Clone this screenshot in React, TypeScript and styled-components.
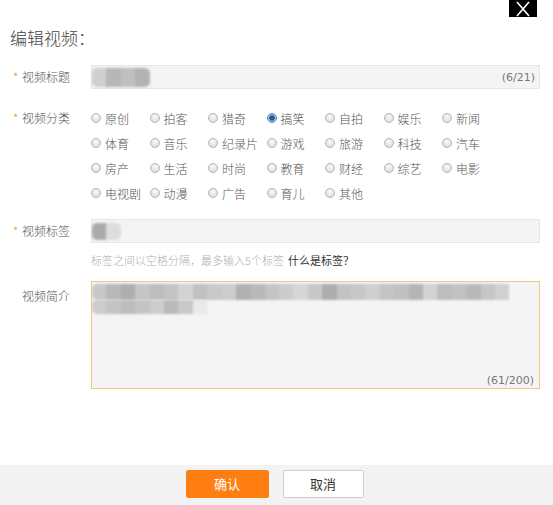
import React, { useState } from 'react';
import styled, { createGlobalStyle } from 'styled-components';

const GlobalStyle = createGlobalStyle`
    html, body {
        margin: 0;
        padding: 0;
        background: #fff;
    }
    body {
        font-family: "Noto Sans CJK SC", "Liberation Sans", sans-serif;
        color: #333;
    }
`;

const Dialog = styled.div`
    width: 553px;
    height: 505px;
    display: flex;
    flex-direction: column;
    position: relative;
    overflow: hidden;
`;

const CloseButton = styled.button`
    position: absolute;
    top: 0;
    right: 16px;
    width: 28px;
    height: 17px;
    background: #000;
    border: none;
    padding: 0;
    display: flex;
    align-items: center;
    justify-content: center;
    cursor: pointer;
`;

const Title = styled.h2`
    margin: 0;
    padding: 26px 0 0 10px;
    height: 30px;
    font-size: 17px;
    font-weight: 300;
    color: #444;
    line-height: 24px;
`;

const Form = styled.div`
    flex: 1;
    display: flex;
    flex-direction: column;
    padding-top: 9px;
`;

const Row = styled.div<{ $mt?: number }>`
    display: flex;
    align-items: flex-start;
    margin-top: ${p => p.$mt || 0}px;
`;

const Label = styled.div<{ $pt?: number }>`
    width: 78px;
    padding-left: 13px;
    padding-top: ${p => p.$pt || 0}px;
    flex-shrink: 0;
    font-size: 12px;
    font-weight: 300;
    line-height: 24px;
    color: #555;
    display: flex;
`;

const Star = styled.span<{ $hidden?: boolean }>`
    width: 9px;
    color: #f28a2e;
    visibility: ${p => (p.$hidden ? 'hidden' : 'visible')};
`;

const Field = styled.div`
    width: 449px;
    display: flex;
    flex-direction: column;
`;

const InputBox = styled.div`
    background: #f4f4f4;
    border: 1px solid #e6e6e6;
    box-sizing: border-box;
    height: 24px;
    display: flex;
    align-items: center;
    justify-content: space-between;
    padding-right: 4px;
`;

const Mosaic = styled.div<{ $h: number }>`
    display: flex;
    height: ${p => p.$h}px;
    filter: blur(0.8px);
    border-radius: 5px;
    overflow: hidden;
`;

const Tile = styled.span`
    width: 14.4px;
    height: 100%;
`;

const Counter = styled.span`
    font-family: "DejaVu Sans", "Liberation Sans", sans-serif;
    font-size: 11px;
    color: #777;
`;

const RadioGrid = styled.div`
    display: grid;
    grid-template-columns: repeat(7, 58.5px);
    grid-auto-rows: 25px;
`;

const RadioItem = styled.label`
    display: flex;
    align-items: center;
    font-size: 12px;
    font-weight: 300;
    color: #555;
    cursor: pointer;
    height: 24px;
`;

const RadioDot = styled.span<{ $checked?: boolean }>`
    width: 10px;
    height: 10px;
    border-radius: 50%;
    box-sizing: border-box;
    border: 1px solid ${p => (p.$checked ? '#5a7fa8' : '#b4b4b4')};
    background: ${p =>
        p.$checked
            ? 'radial-gradient(circle, #1e5d9e 0 2.5px, #9ab8d8 3px, #e8eef5 100%)'
            : 'radial-gradient(circle at 50% 35%, #fafafa, #d6d6d6)'};
    margin-right: 4px;
    flex-shrink: 0;
`;

const Hint = styled.div`
    font-size: 11px;
    font-weight: 300;
    line-height: 18px;
    margin-top: 8px;
    color: #b0b0b0;
`;

const HintLink = styled.a`
    color: #333;
    font-weight: 400;
    margin-left: 4px;
    cursor: pointer;
`;

const TextArea = styled.div`
    height: 108px;
    box-sizing: border-box;
    background: #f4f4f4;
    border: 1px solid #f0c97c;
    position: relative;
    padding-top: 2px;
    display: flex;
    flex-direction: column;
`;

const AreaCounter = styled(Counter)`
    position: absolute;
    right: 5px;
    bottom: 1px;
`;

const Footer = styled.div`
    height: 37px;
    background: #f3f3f3;
    display: flex;
    justify-content: center;
    align-items: center;
    gap: 14px;
    padding-right: 4px;
    border-bottom: 3px solid #edf2f7;
`;

const Button = styled.button<{ $primary?: boolean }>`
    width: ${p => (p.$primary ? 83 : 81)}px;
    height: 28px;
    font-family: "Noto Sans CJK SC", sans-serif;
    font-size: 13px;
    border-radius: 2px;
    cursor: pointer;
    box-sizing: border-box;
    background: ${p => (p.$primary ? '#ff7e12' : '#fff')};
    color: ${p => (p.$primary ? '#fff' : '#333')};
    border: 1px solid ${p => (p.$primary ? '#ff7e12' : '#cfcfcf')};
`;

const categories = [
    '原创', '拍客', '猎奇', '搞笑', '自拍', '娱乐', '新闻',
    '体育', '音乐', '纪录片', '游戏', '旅游', '科技', '汽车',
    '房产', '生活', '时尚', '教育', '财经', '综艺', '电影',
    '电视剧', '动漫', '广告', '育儿', '其他',
];

const titleTiles = ['#cfcfcf', '#b7b7b7', '#c0c0c0', '#b3b3b3'];
const tagTiles = ['#ababab', '#dddddd'];
const introLine1 = [
    '#c8c8c8', '#b8b8b8', '#aeaeae', '#c5c5c5', '#bdbdbd', '#c3c3c3', '#d3d3d3', '#c0c0c0',
    '#c9c9c9', '#cdcdcd', '#b0b0b0', '#b8b8b8', '#c4c4c4', '#cccccc', '#d6d6d6', '#c8c8c8',
    '#adadad', '#c2c2c2', '#c7c7c7', '#cfcfcf', '#c4c4c4', '#c0c0c0', '#b5b5b5', '#d2d2d2',
    '#bdbdbd', '#c1c1c1', '#b9b9b9', '#c6c6c6', '#d0d0d0',
];
const introLine2 = ['#cccccc', '#c3c3c3', '#bcbcbc', '#c4c4c4', '#cdcdcd', '#bababa', '#c8c8c8', '#e9e9e9'];

const App: React.FC = () => {
    const [category, setCategory] = useState('搞笑');

    return (
        <Dialog>
            <GlobalStyle />
            <CloseButton aria-label="关闭">
                <svg width="16" height="16" viewBox="0 0 16 16">
                    <path d="M2 1 L14 15 M14 1 L2 15" stroke="#fff" strokeWidth="1.6" fill="none" />
                </svg>
            </CloseButton>
            <Title>编辑视频：</Title>
            <Form>
                <Row>
                    <Label><Star>*</Star>视频标题</Label>
                    <Field>
                        <InputBox>
                            <Mosaic $h={19}>
                                {titleTiles.map((c, i) => <Tile key={i} style={{ background: c }} />)}
                            </Mosaic>
                            <Counter>(6/21)</Counter>
                        </InputBox>
                    </Field>
                </Row>

                <Row $mt={17}>
                    <Label><Star>*</Star>视频分类</Label>
                    <RadioGrid>
                        {categories.map(name => (
                            <RadioItem key={name} onClick={() => setCategory(name)}>
                                <RadioDot $checked={category === name} />
                                {name}
                            </RadioItem>
                        ))}
                    </RadioGrid>
                </Row>

                <Row $mt={13}>
                    <Label><Star>*</Star>视频标签</Label>
                    <Field>
                        <InputBox>
                            <Mosaic $h={17}>
                                {tagTiles.map((c, i) => <Tile key={i} style={{ background: c }} />)}
                            </Mosaic>
                        </InputBox>
                        <Hint>
                            标签之间以空格分隔，最多输入5个标签
                            <HintLink>什么是标签？</HintLink>
                        </Hint>
                    </Field>
                </Row>

                <Row $mt={12}>
                    <Label $pt={3}><Star $hidden>*</Star>视频简介</Label>
                    <Field>
                        <TextArea>
                            <Mosaic $h={16}>
                                {introLine1.map((c, i) => <Tile key={i} style={{ background: c }} />)}
                            </Mosaic>
                            <Mosaic $h={14}>
                                {introLine2.map((c, i) => <Tile key={i} style={{ background: c }} />)}
                            </Mosaic>
                            <AreaCounter>(61/200)</AreaCounter>
                        </TextArea>
                    </Field>
                </Row>
            </Form>
            <Footer>
                <Button $primary>确认</Button>
                <Button>取消</Button>
            </Footer>
        </Dialog>
    );
};

export default App;
